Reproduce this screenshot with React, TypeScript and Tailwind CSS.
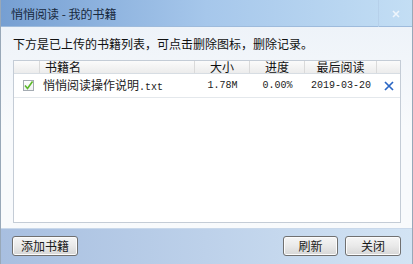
import React from "react";

const cjk = "font-['SimSun','Noto_Sans_CJK_SC',sans-serif]";
const mono = "font-['Liberation_Mono','Noto_Sans_CJK_SC',monospace]";

const btnCls =
  "flex h-[20px] items-center justify-center rounded-[3px] border border-[#707070] bg-gradient-to-b from-[#f6f6f6] via-[#e9e9e9] to-[#d6d6d6] text-[12px] leading-none text-[#1a1a1a] shadow-[inset_0_0_0_1px_#fcfcfc]";

const COLS = [
  { label: "", w: "w-[26px] justify-center" },
  { label: "书籍名", w: "w-[155px] justify-start pl-[5px]" },
  { label: "大小", w: "w-[55px] justify-center" },
  { label: "进度", w: "w-[55px] justify-center" },
  { label: "最后阅读", w: "w-[72px] justify-center" },
  { label: "", w: "flex-1" },
];

export default function App() {
  return (
    <div className={`${cjk} flex h-[264px] w-[413px] flex-col overflow-hidden border-x border-[#98a8b8] bg-[#f8fafc]`}>
      {/* title bar */}
      <div className="flex h-[27px] shrink-0 items-center bg-gradient-to-r from-[#769fd2] via-[#a6c7eb] to-[#c3def4] pl-[10px] shadow-[inset_0_-1px_0_#9ebbdc]">
        <span className="flex-1 text-[12px] text-[#17283d]">悄悄阅读 - 我的书籍</span>
        <div className="flex h-full w-[34px] items-center justify-center border-l border-[#b6d0ea]">
          <svg width="8" height="8" viewBox="0 0 8 8">
            <path d="M1 1 L7 7 M7 1 L1 7" stroke="#eef5fc" strokeWidth="1.6" />
          </svg>
        </div>
      </div>

      {/* body */}
      <div className="flex flex-1 flex-col bg-gradient-to-b from-[#eef3f9] via-[#f8fafc] to-[#f8fafc] px-[12px] pt-[10px]">
        <p className="h-[23px] text-[12px] leading-[14px] text-[#111]">
          下方是已上传的书籍列表，可点击删除图标，删除记录。
        </p>
        <div className="h-[163px] w-[388px] border border-[#c4ccd6] bg-white">
          <div className="flex h-[13px] border-b border-[#d7dde3] bg-gradient-to-b from-[#fbfbfb] to-[#ececec]">
            {COLS.map((c, i) => (
              <div
                key={i}
                className={`${c.w} flex items-center border-r border-[#dadada] text-[12px] leading-none text-[#111] last:border-r-0`}
              >
                {c.label}
              </div>
            ))}
          </div>
          <div className="flex h-[24px] items-center border-b border-[#e4e8ec] text-[12px] text-[#222]">
            <div className="flex w-[26px] items-center justify-center pl-[2px]">
              <div className="flex h-[11px] w-[11px] items-center justify-center border border-[#a4abb2] bg-gradient-to-b from-white to-[#eef0f2]">
                <svg width="9" height="9" viewBox="0 0 9 9">
                  <path d="M1 4.5 L3.5 7.5 L8.5 0.5" fill="none" stroke="#5cb82a" strokeWidth="1.6" />
                </svg>
              </div>
            </div>
            <div className="w-[155px] pl-[3px]">
              悄悄阅读操作说明<span className={`${mono} text-[10px]`}>.txt</span>
            </div>
            <div className={`${mono} w-[55px] text-center text-[10px]`}>1.78M</div>
            <div className={`${mono} w-[55px] text-center text-[10px]`}>0.00%</div>
            <div className={`${mono} w-[72px] text-center text-[10px]`}>2019-03-20</div>
            <div className="flex flex-1 items-center justify-center">
              <svg width="10" height="10" viewBox="0 0 10 10">
                <path d="M1 1 L9 9 M9 1 L1 9" stroke="#2a66c4" strokeWidth="1.7" />
              </svg>
            </div>
          </div>
        </div>
      </div>

      {/* bottom bar */}
      <div className="flex h-[36px] shrink-0 items-center bg-gradient-to-r from-[#a8bfe0] via-[#bdd1ea] to-[#d3e4f4] px-[11px] shadow-[inset_0_1px_0_#c9d8ea]">
        <button className={`${btnCls} w-[66px]`}>添加书籍</button>
        <div className="flex-1" />
        <button className={`${btnCls} w-[55px]`}>刷新</button>
        <button className={`${btnCls} ml-[7px] w-[56px]`}>关闭</button>
      </div>
    </div>
  );
}
